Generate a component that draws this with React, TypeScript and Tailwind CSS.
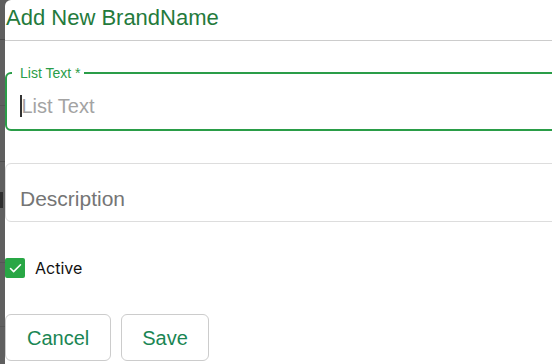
import { Check } from 'lucide-react';

export default function App() {
  return (
    <div className="flex h-[364px] w-[552px] overflow-hidden bg-[#5f5f5f]">
      {/* page behind the modal overlay */}
      <div className="flex w-[5px] shrink-0 flex-col">
        <div className="h-[40px] border-b border-[#4a4a4a]" />
        <div className="h-[66px] border-b border-[#555]" />
        <div className="h-[56px] border-b border-[#4e4e4e]" />
        <div className="mt-[30px] h-[16px] w-[3px] bg-[#2e2e2e]" />
        <div className="h-[55px] border-b border-[#555]" />
        <div className="h-[64px] border-b border-[#555]" />
      </div>

      <div className="w-[600px] shrink-0 rounded-tl-[6px] bg-white font-['Liberation_Sans',Arial,sans-serif]">
        <div className="h-[41px] border-b border-[#cccccc] pl-[1px] pt-[5px]">
          <h2 className="text-[22px] leading-[26px] text-[#247a3c]">Add New BrandName</h2>
        </div>

        <fieldset className="mt-[25px] h-[65px] rounded-[6px] border-2 border-[#2a9d48] px-[13px]">
          <legend className="ml-[-8px] px-[8px] pr-[4px] text-[14px] leading-[14px] text-[#2a9d48]">
            List Text *
          </legend>
          <div className="flex items-center pt-[15px]">
            <span className="h-[22px] w-[1.5px] bg-[#333]" />
            <span className="text-[20px] leading-[22px] text-[#a3a3a3]">List Text</span>
          </div>
        </fieldset>

        <div className="mt-[32px] h-[59px] rounded-[6px] border border-[#dddddd] pl-[14px] pt-[23px]">
          <span className="text-[21px] leading-[24px] text-[#757575]">Description</span>
        </div>

        <label className="mt-[36px] flex items-center gap-[10px]">
          <span className="flex h-[20px] w-[20px] items-center justify-center rounded-[2px] bg-[#28a745]">
            <Check size={15} strokeWidth={2.5} className="text-white" />
          </span>
          <span className="font-['Inter',sans-serif] text-[16px] leading-[20px] text-[#111]">Active</span>
        </label>

        <div className="mt-[36px] flex gap-[10px]">
          <button
            type="button"
            className="h-[47px] rounded-[6px] border border-[#cccccc] px-[21px] text-[20px] text-[#1a8654]"
          >
            Cancel
          </button>
          <button
            type="button"
            className="h-[47px] rounded-[6px] border border-[#cccccc] px-[20px] text-[20px] text-[#1a8654]"
          >
            Save
          </button>
        </div>
      </div>
    </div>
  );
}
